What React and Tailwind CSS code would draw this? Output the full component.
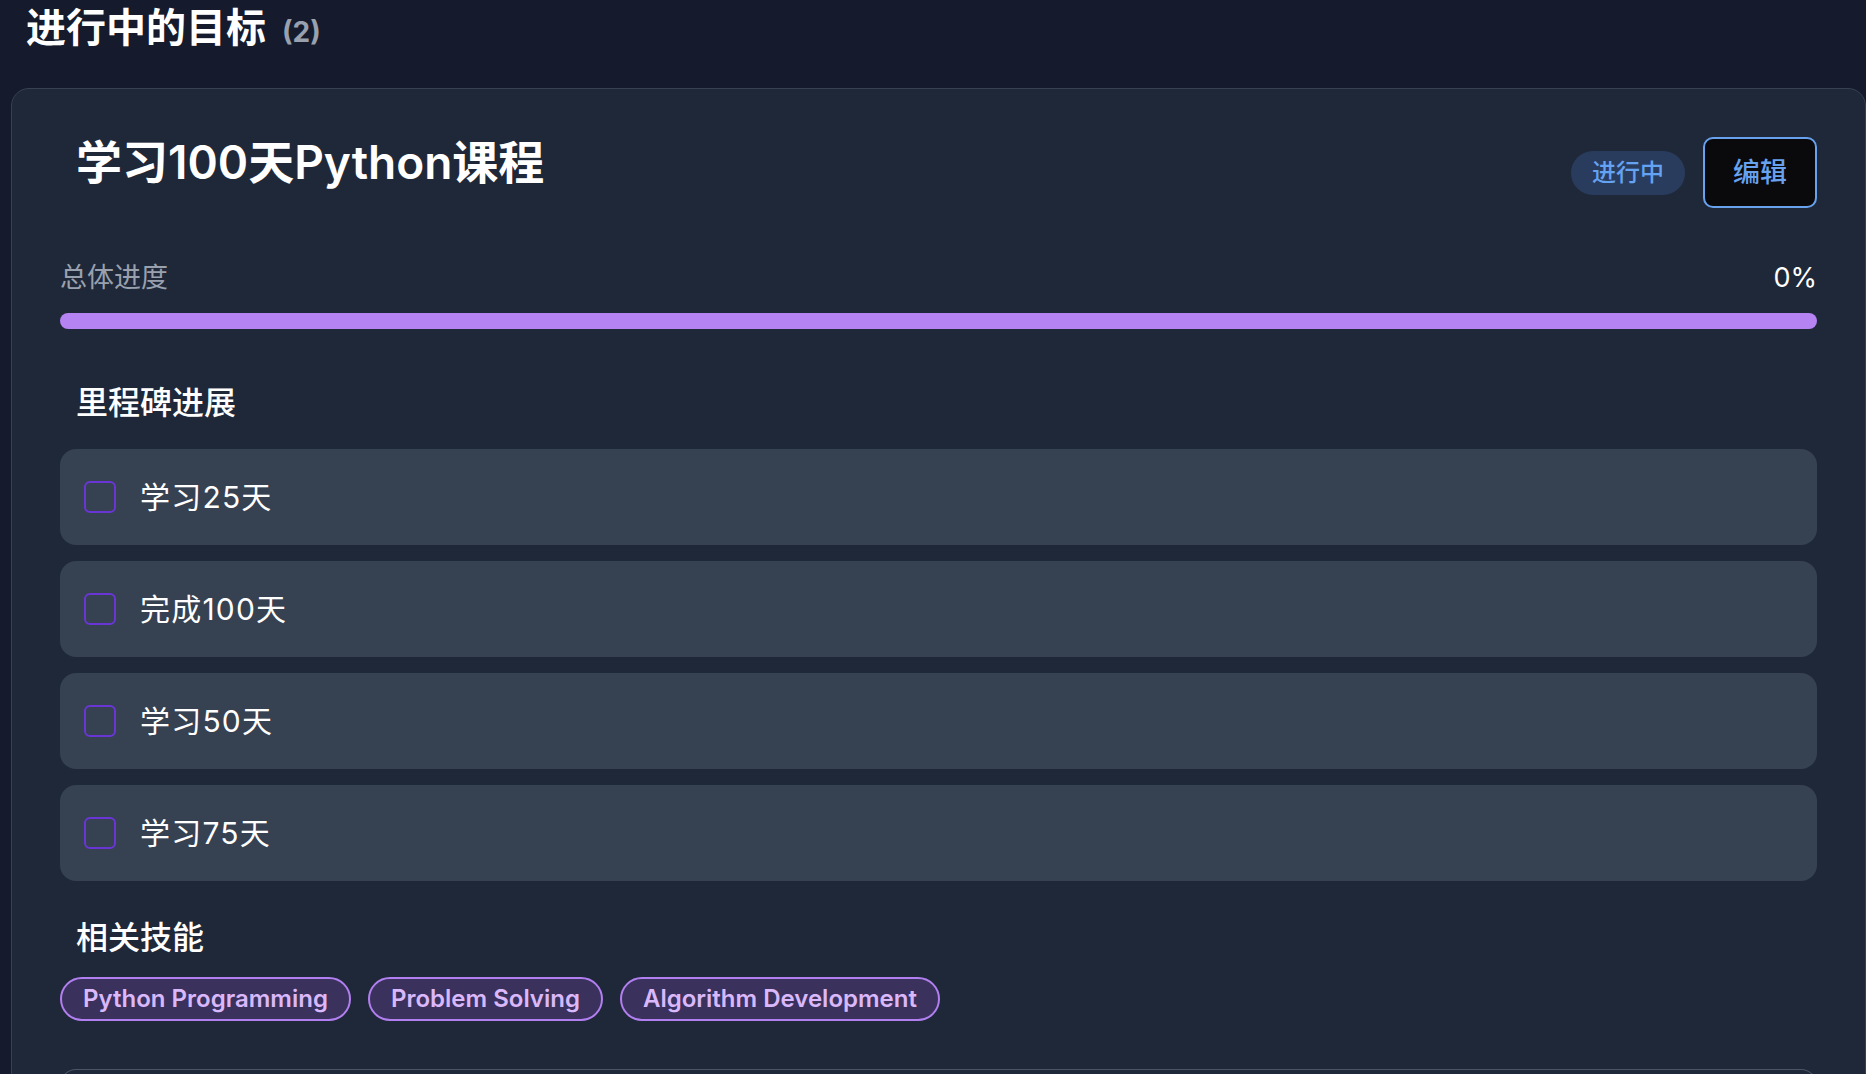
import React from "react";

const milestones = ["学习25天", "完成100天", "学习50天", "学习75天"];
const skills = ["Python Programming", "Problem Solving", "Algorithm Development"];

const font = { fontFamily: 'Inter, "Noto Sans CJK SC", sans-serif' };

const MilestoneRow = ({ label }) => (
  <div className="flex h-24 items-center rounded-2xl bg-[#364152] pl-6">
    <div className="h-8 w-8 shrink-0 rounded-md border-2 border-[#6a35d6]" />
    <span className="ml-[24px] text-[30px] tracking-[1.2px] text-white">{label}</span>
  </div>
);

const SkillChip = ({ name }) => (
  <span className="flex h-[44px] items-center rounded-full border-2 border-[#b27ff0] bg-[#3a315d] px-[21px] text-[24px] font-semibold text-[#dab8fc]">
    {name}
  </span>
);

export default function App() {
  return (
    <div
      className="h-[1074px] w-full overflow-hidden bg-[#151b2c] text-white"
      style={font}
    >
      {/* page heading */}
      <div className="flex items-baseline pl-[26px] pt-[2px]">
        <h1 className="text-[40px] font-semibold leading-[52px]">进行中的目标</h1>
        <span className="ml-4 text-[28px] font-bold text-gray-400">(2)</span>
      </div>

      {/* goal card */}
      <div className="ml-[11px] mt-[34px] rounded-[18px] border border-[#374151] bg-[#1f2839] px-12 pt-12">
        <div className="flex items-start justify-between">
          <h2 className="mt-[2px] pl-4 text-[46px] font-semibold leading-none">
            学习100天Python课程
          </h2>
          <div className="flex items-center gap-[18px]">
            <span className="flex h-[44px] w-[114px] items-center justify-center rounded-full bg-[#2a3c5e] text-[24px] font-medium text-[#64a3f2]">
              进行中
            </span>
            <button className="flex h-[71px] w-[114px] items-center justify-center rounded-[10px] border-2 border-[#68a2ef] bg-[#0a0a0d] pt-[2px] text-[27px] font-medium text-[#68a2ef]">
              编辑
            </button>
          </div>
        </div>

        {/* overall progress */}
        <div className="mt-[49px] flex items-center justify-between leading-[42px]">
          <span className="text-[27px] text-gray-400">总体进度</span>
          <span className="text-[27px] text-white">0%</span>
        </div>
        <div className="mt-[14px] h-4 w-full rounded-full bg-[#b583f2]" />

        {/* milestones */}
        <h3 className="mt-[50px] pl-4 text-[32px] font-medium leading-[48px]">里程碑进展</h3>
        <div className="mt-[22px] flex flex-col gap-4">
          {milestones.map((m) => (
            <MilestoneRow key={m} label={m} />
          ))}
        </div>

        {/* skills */}
        <h3 className="mt-[33px] pl-4 text-[32px] font-medium leading-[48px]">相关技能</h3>
        <div className="mt-[15px] flex flex-wrap gap-[17px]">
          {skills.map((s) => (
            <SkillChip key={s} name={s} />
          ))}
        </div>

        <div className="mt-12 h-20 rounded-t-2xl border-x border-t border-[#4b5563]" />
      </div>
    </div>
  );
}
